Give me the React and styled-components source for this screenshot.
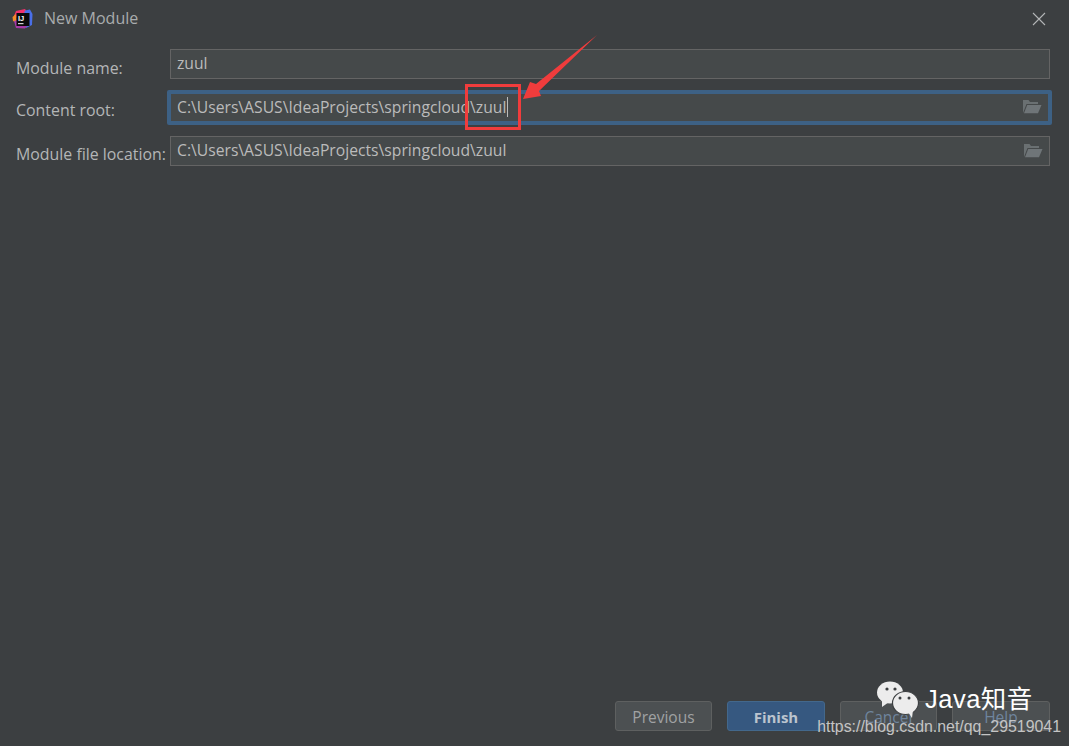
import React from "react";
import styled, { createGlobalStyle } from "styled-components";

const Global = createGlobalStyle`
  html, body { margin: 0; padding: 0; background: #3c3f41; }
  #root { width: 1069px; height: 746px; overflow: hidden; }
`;

const Dialog = styled.div`
  position: relative;
  box-sizing: border-box;
  width: 1069px;
  height: 746px;
  display: flex;
  flex-direction: column;
  background: #3c3f41;
  color: #bbbbbb;
  font-family: "Open Sans", "Noto Sans", sans-serif;
  font-size: 15.7px;
  overflow: hidden;
`;

const TitleBar = styled.header`
  display: flex;
  align-items: center;
  height: 37px;
  padding: 0 23px 0 12px;
  gap: 10px;
  flex: none;
`;

const Title = styled.div`
  flex: 1;
  color: #a9acad;
  font-size: 16px;
  padding-bottom: 2px;
`;

const Form = styled.div`
  display: grid;
  grid-template-columns: 154px 880px;
  padding: 12px 0 0 16px;
  row-gap: 12px;
  align-items: center;
`;

const Label = styled.label`
  color: #b4b6b7;
  font-size: 15.9px;
  white-space: nowrap;
  position: relative;
  top: ${(p) => p.$shift}px;
`;

const Field = styled.div`
  box-sizing: border-box;
  height: 30px;
  display: flex;
  align-items: center;
  justify-content: space-between;
  padding: 0 6px 2px 6px;
  background: #45494a;
  border: 1px solid #646464;
  color: #bbbbbb;
`;

const FocusedField = styled(Field)`
  height: 33px;
  margin: 0 -1px 0 -2px;
  padding: 0 6px 2px 6px;
  border: 3px solid #3d6185;
  border-radius: 1px;
  box-shadow: 0 0 0 1px #3d6185;
`;

const Value = styled.span`
  display: inline-flex;
  align-items: center;
  white-space: nowrap;
`;

const Caret = styled.i`
  display: inline-block;
  width: 1px;
  height: 20px;
  margin-left: 1px;
  background: #bbbbbb;
`;

const Spacer = styled.div`
  flex: 1;
`;

const Footer = styled.footer`
  display: flex;
  justify-content: flex-end;
  gap: 15px;
  padding: 0 19.3px 15px 0;
  flex: none;
`;

const Button = styled.button`
  box-sizing: border-box;
  width: 97.5px;
  height: 30px;
  padding: 1px 0 0;
  font-family: inherit;
  font-size: ${(p) => (p.$primary ? "15px" : "15.5px")};
  font-weight: ${(p) => (p.$primary ? 700 : 400)};
  color: ${(p) => (p.$primary ? "#bbc4ce" : p.$muted ? "#6f859e" : "#a0a2a3")};
  background: ${(p) => (p.$primary ? "#365880" : "#4c5052")};
  border: 1px solid ${(p) => (p.$primary ? "#43688c" : "#5e6060")};
  border-radius: 3px;
`;

const ArrowArt = styled.svg`
  position: absolute;
  left: 515px;
  top: 30px;
`;

const RedBox = styled.div`
  position: absolute;
  left: 465px;
  top: 84px;
  width: 56px;
  height: 46px;
  box-sizing: border-box;
  border: 3px solid #f03c3c;
`;

const Brand = styled.div`
  position: absolute;
  left: 877px;
  top: 681px;
  display: flex;
  align-items: flex-start;
  gap: 6px;
  color: #ffffff;
  font-family: "Liberation Sans", "Noto Sans CJK SC", sans-serif;
  font-size: 25.5px;
  line-height: 36px;
`;

const BrandText = styled.span`
  letter-spacing: 0.5px;
`;

const Watermark = styled.div`
  position: absolute;
  right: 8px;
  top: 718px;
  color: #c4c4c4;
  font-family: "Liberation Sans", sans-serif;
  font-size: 15.9px;
  white-space: nowrap;
`;

const IdeaLogo = () => (
  <svg width="22" height="22" viewBox="0 0 22 22" style={{ flex: "none" }}>
    <path d="M2 8 L4 3 L13 1 L16 5 L8 12 Z" fill="#f2316e" />
    <path d="M13 2.5 L18 1.5 L20.5 6 L20 17 L14 20 L10 12 Z" fill="#4a6fe8" />
    <path d="M0.5 9 L4 6 L5 15 L1 13 Z" fill="#f58a27" />
    <path d="M2 13 L4 20 L13 20.5 L16 17 L6 12 Z" fill="#a83aa8" />
    <rect x="4.5" y="5" width="13" height="13" fill="#0b0b0b" />
    <rect x="6" y="15" width="5.5" height="1.2" fill="#cfcfcf" />
    <text x="6" y="12.6" fill="#ffffff" fontSize="7.5" fontWeight="700" fontFamily="Liberation Sans">IJ</text>
  </svg>
);

const CloseIcon = () => (
  <svg width="14" height="14" viewBox="0 0 14 14">
    <path d="M1 1 L13 13 M13 1 L1 13" stroke="#b4b6b7" strokeWidth="1.1" fill="none" />
  </svg>
);

const FolderIcon = () => (
  <svg width="20" height="15" viewBox="0 0 20 15">
    <path d="M1 14 V1 H6.5 L8 3 H16 V5 H4.5 L1.8 12 Z" fill="#6a7072" />
    <path d="M5.2 6 H19.5 L16 14.2 H2 Z" fill="#6f7578" />
  </svg>
);

const WeChatIcon = () => (
  <svg width="42" height="38" viewBox="0 0 42 38" style={{ flex: "none" }}>
    <ellipse cx="13" cy="11.5" rx="13" ry="11" fill="#ececec" />
    <path d="M5 18 L5 26 L12 21 Z" fill="#ececec" />
    <circle cx="10" cy="8" r="1.6" fill="#3c3f41" />
    <circle cx="18" cy="8" r="1.6" fill="#3c3f41" />
    <ellipse cx="28.5" cy="22" rx="13" ry="11.5" stroke="#3c3f41" strokeWidth="1.2" fill="#ececec" />
    <path d="M31 31 L35 37 L36 29 Z" fill="#ececec" />
    <circle cx="23" cy="17" r="1.5" fill="#3c3f41" />
    <circle cx="32" cy="17" r="1.5" fill="#3c3f41" />
  </svg>
);

export default function App() {
  return (
    <Dialog>
      <Global />
      <TitleBar>
        <IdeaLogo />
        <Title>New Module</Title>
        <CloseIcon />
      </TitleBar>
      <Form>
        <Label $shift={4}>Module name:</Label>
        <Field><Value>zuul</Value></Field>
        <Label $shift={2}>Content root:</Label>
        <FocusedField>
          <Value>C:\Users\ASUS\IdeaProjects\springcloud\zuul<Caret /></Value>
          <FolderIcon />
        </FocusedField>
        <Label $shift={3}>Module file location:</Label>
        <Field>
          <Value>C:\Users\ASUS\IdeaProjects\springcloud\zuul</Value>
          <FolderIcon />
        </Field>
      </Form>
      <Spacer />
      <Footer>
        <Button>Previous</Button>
        <Button $primary>Finish</Button>
        <Button $muted>Cancel</Button>
        <Button $muted>Help</Button>
      </Footer>
      <RedBox />
      <ArrowArt width="90" height="80" viewBox="0 0 90 80">
        <path d="M82 5 L21 54 L15 52 L8 69 L26 66 L24 61 Z" fill="#f03c3c" />
      </ArrowArt>
      <Brand>
        <WeChatIcon />
        <BrandText>Java知音</BrandText>
      </Brand>
      <Watermark>https://blog.csdn.net/qq_29519041</Watermark>
    </Dialog>
  );
}
